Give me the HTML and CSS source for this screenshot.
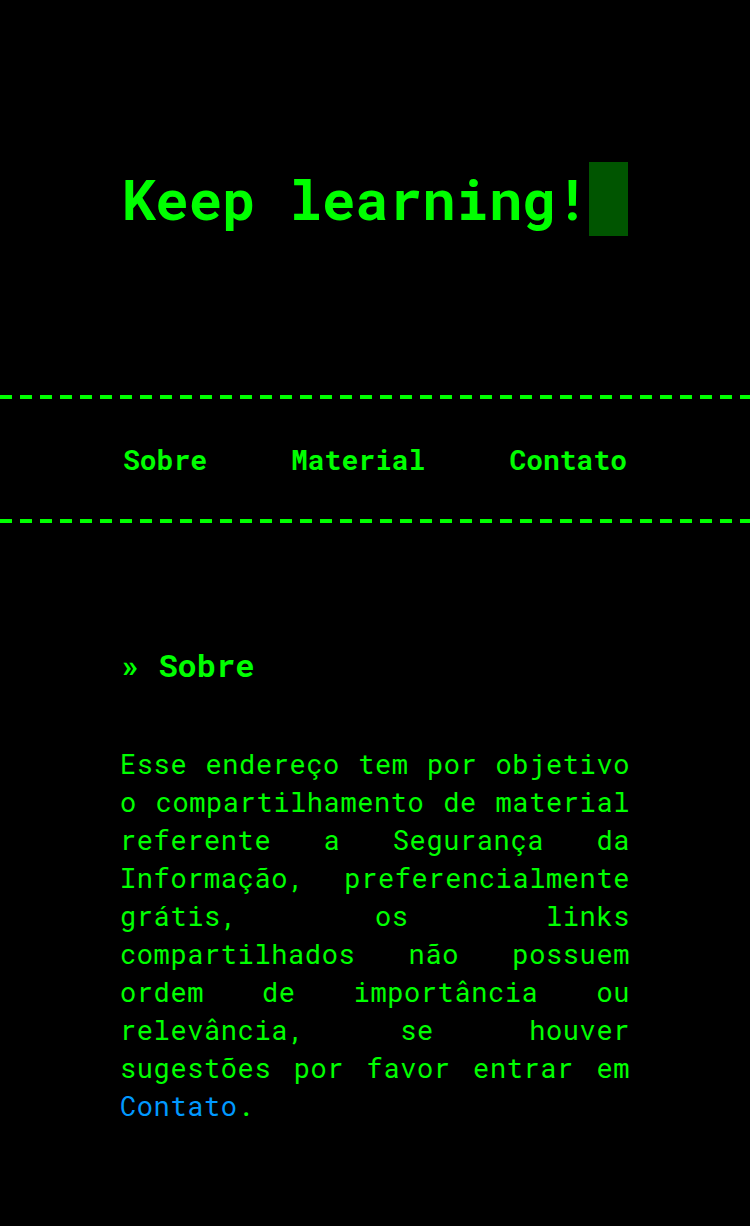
FILE: index.html
```html
<!DOCTYPE html>
<html lang="pt-BR">
<head>
<meta charset="utf-8">
<title>Keep learning!</title>
<link rel="stylesheet" href="styles.css">
</head>
<body>
<header class="hero">
  <h1 class="title"><span class="title-text">Keep learning!</span><span class="cursor"></span></h1>
</header>
<nav class="nav">
  <a class="nav-link" href="#sobre">Sobre</a>
  <a class="nav-link" href="#material">Material</a>
  <a class="nav-link" href="#contato">Contato</a>
</nav>
<main class="content">
  <section class="section" id="sobre">
    <h2 class="section-title"><span class="raquo">»</span> Sobre</h2>
    <p class="text">Esse endereço tem por objetivo o compartilhamento de material referente a Segurança da Informação, preferencialmente grátis, os links compartilhados não possuem ordem de importância ou relevância, se houver sugestões por favor entrar em <a class="link" href="#contato">Contato</a>.</p>
  </section>
</main>
</body>
</html>
```
FILE: styles.css
```css
html, body {
  margin: 0;
  padding: 0;
  background: #000;
}
body {
  color: #00ff00;
  font-family: "Roboto Mono", "DejaVu Sans Mono", "Liberation Mono", monospace;
  min-height: 1226px;
}
.hero {
  height: 395px;
  box-sizing: border-box;
  padding-top: 162px;
}
.title {
  margin: 0;
  display: flex;
  justify-content: center;
  align-items: center;
  font-size: 55.6px;
  font-weight: 700;
  line-height: 74px;
  height: 74px;
}
.cursor {
  display: inline-block;
  width: 39px;
  height: 74px;
  background: #005500;
}
.nav {
  height: 128px;
  box-sizing: border-box;
  padding: 4px 0;
  display: flex;
  justify-content: center;
  align-items: center;
  gap: 84px;
  background:
    repeating-linear-gradient(90deg, #00ff00 0 12px, transparent 12px 20px) left top / 100% 4px no-repeat,
    repeating-linear-gradient(90deg, #00ff00 0 12px, transparent 12px 20px) left bottom / 100% 4px no-repeat;
}
.nav-link {
  color: #00ff00;
  text-decoration: none;
  font-size: 28px;
  font-weight: 700;
  line-height: 40px;
  margin-top: 2px;
}
.content {
  width: 510px;
  margin: 0 auto;
  padding-top: 118px;
}
.section-title {
  margin: 0;
  font-size: 32px;
  font-weight: 700;
  line-height: 48px;
}
.raquo {
  font-size: 32px;
}
.text {
  margin: 56px 0 0;
  font-size: 27px;
  letter-spacing: 0.6px;
  line-height: 38px;
  text-align: justify;
}
.link {
  color: #0099ff;
  text-decoration: none;
}
```
